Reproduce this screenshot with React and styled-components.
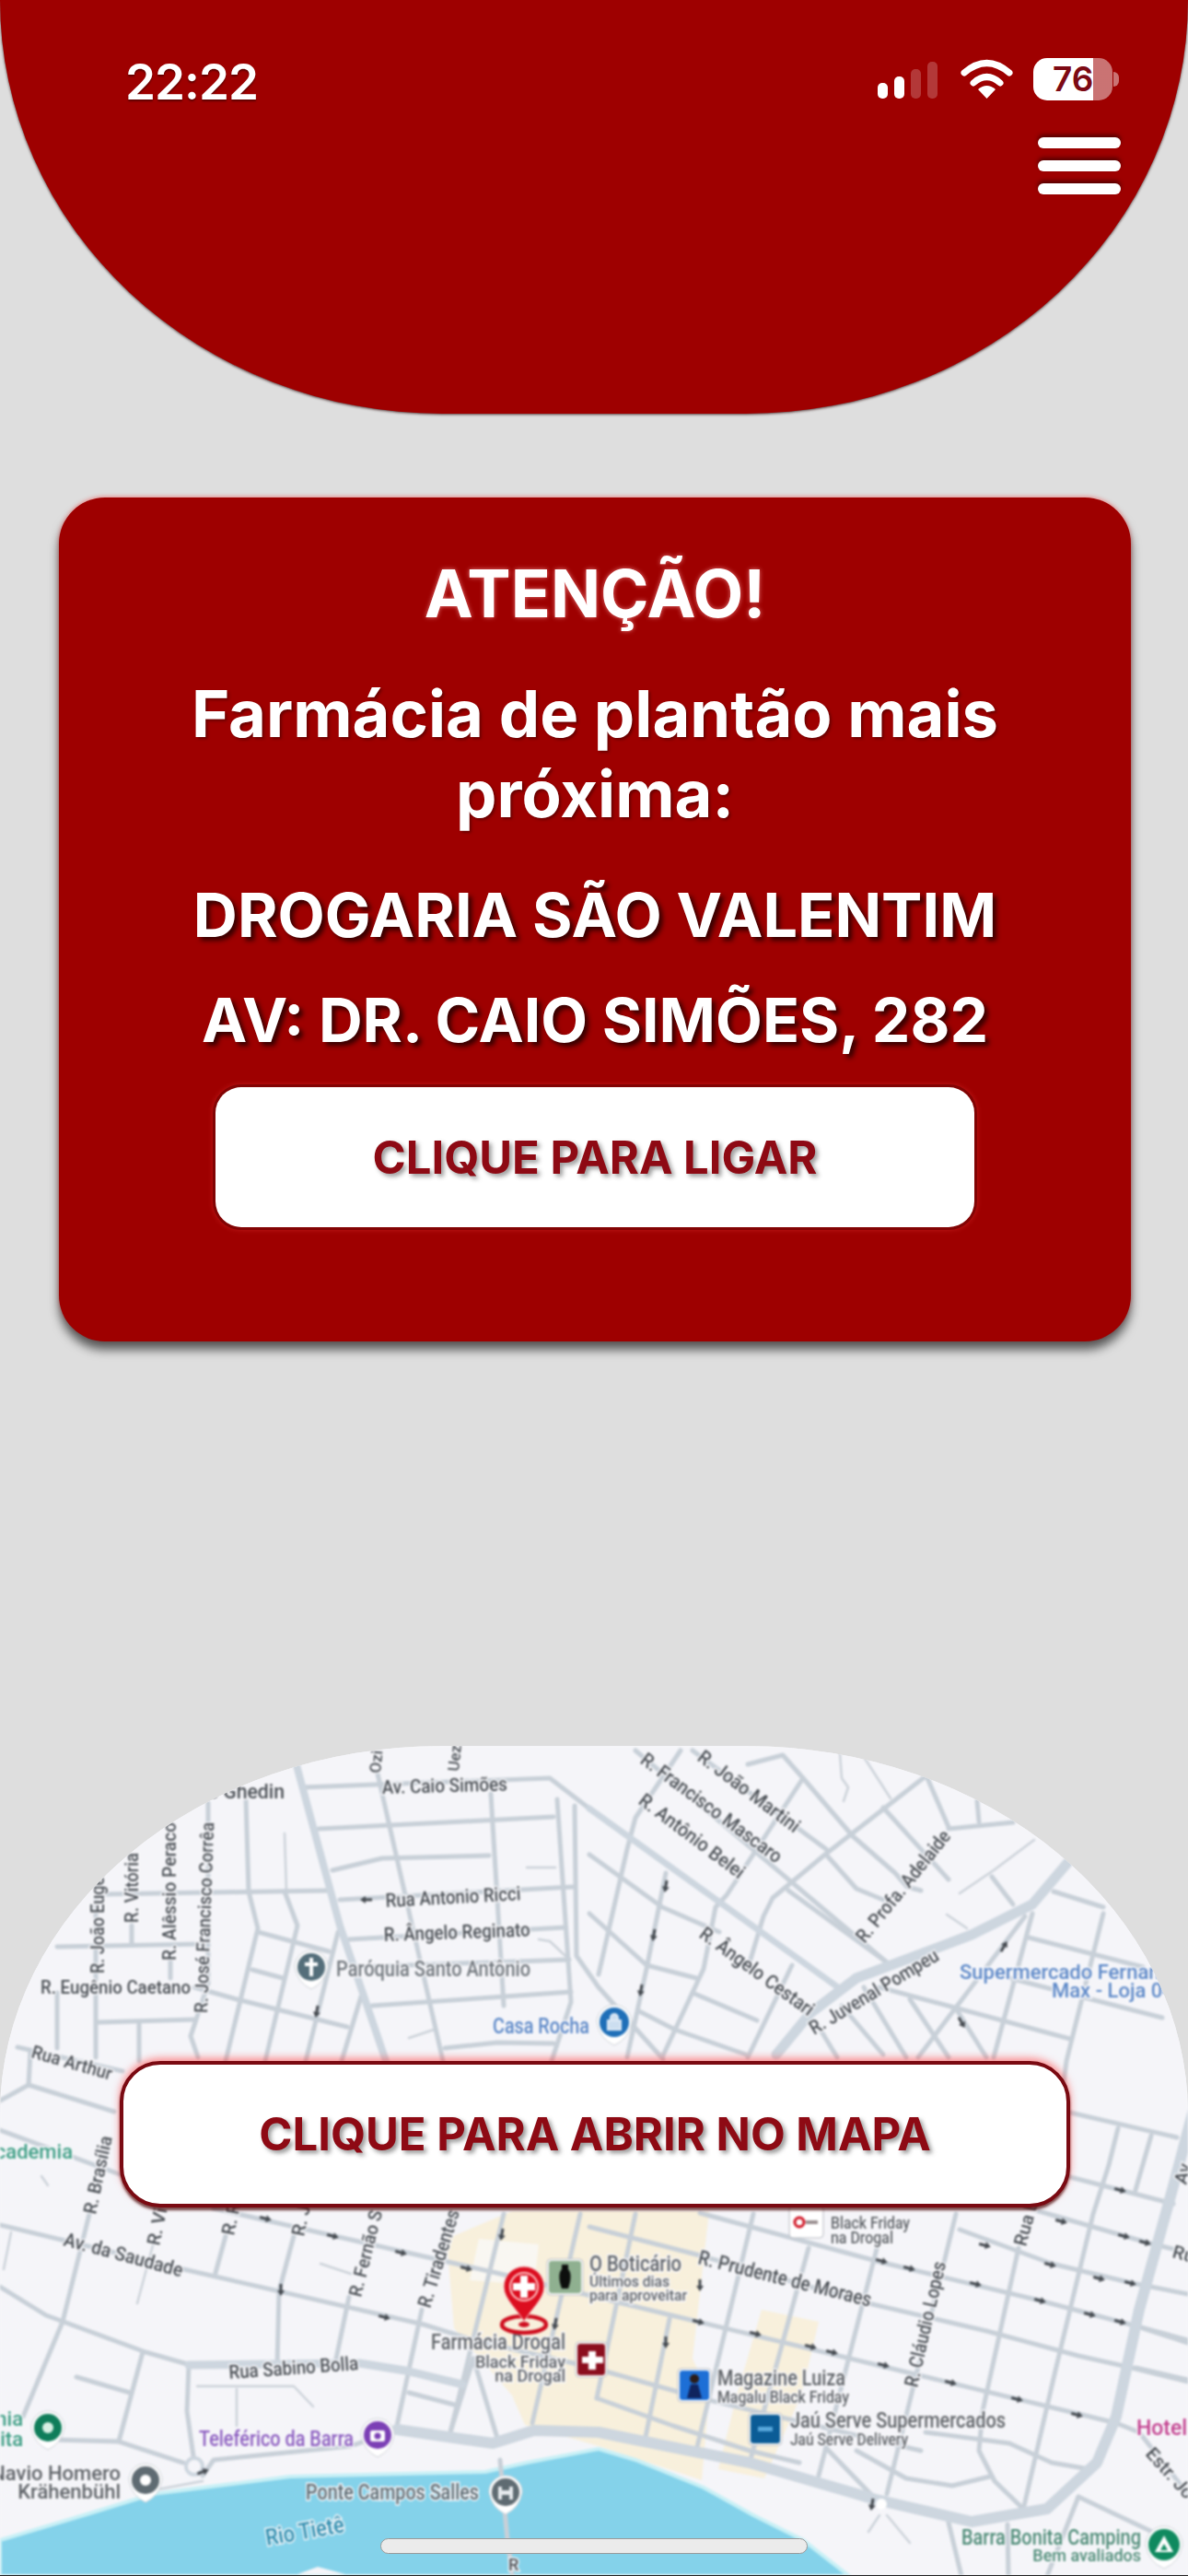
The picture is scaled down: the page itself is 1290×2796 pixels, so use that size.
import React from 'react';
import styled, { createGlobalStyle } from 'styled-components';

const GlobalStyle = createGlobalStyle`
  html, body {
    margin: 0;
    padding: 0;
    background: #dedede;
  }
`;

const FONT = `Inter, "Liberation Sans", sans-serif`;
const RED = '#9e0000';

const Page = styled.div`
  position: relative;
  width: 1290px;
  height: 2796px;
  overflow: hidden;
  display: flex;
  flex-direction: column;
  background: #dedede;
  font-family: ${FONT};
`;

const Header = styled.header`
  box-sizing: border-box;
  height: 449px;
  flex: none;
  padding: 63px 82px 0 136px;
  background: ${RED};
  border-radius: 0 0 480px 480px / 0 0 449px 449px;
  box-shadow: 0 1px 3px rgba(40, 0, 0, 0.75);
`;

const StatusBar = styled.div`
  display: flex;
  align-items: flex-start;
  justify-content: space-between;
`;

const Clock = styled.div`
  color: #fff;
  font-size: 53px;
  line-height: 54px;
  font-weight: 600;
  margin-top: -1px;
  letter-spacing: -1px;
  text-shadow: 0 2px 2px rgba(70, 0, 0, 0.7);
`;

const StatusIcons = styled.div`
  display: flex;
  align-items: flex-end;
  height: 46px;
`;

const Signal = styled.div`
  display: flex;
  align-items: flex-end;
  gap: 7px;
  margin-right: 25px;
  margin-bottom: 2px;
`;

const SignalBar = styled.span`
  width: 11px;
  height: ${(p) => p.$h}px;
  border-radius: 5px;
  background: ${(p) => (p.$on ? '#fff' : 'rgba(255,255,255,0.22)')};
`;

const Wifi = styled.svg`
  width: 57px;
  height: 43px;
  margin-right: 22px;
  margin-bottom: 2px;
`;

const Battery = styled.div`
  position: relative;
  box-sizing: border-box;
  width: 86px;
  height: 46px;
  padding-left: 21px;
  border-radius: 15px;
  color: #7d0a14;
  font-size: 37px;
  line-height: 46px;
  font-weight: 600;
  background: linear-gradient(90deg, #fff 0, #fff 76%, rgba(255, 255, 255, 0.45) 76%);

  &::after {
    content: '';
    position: absolute;
    right: -7px;
    top: 15px;
    width: 6px;
    height: 16px;
    border-radius: 0 8px 8px 0;
    background: rgba(255, 255, 255, 0.45);
  }
`;

const MenuButton = styled.div`
  display: flex;
  flex-direction: column;
  gap: 13px;
  width: 90px;
  margin: 33px -9px 0 auto;
`;

const MenuBar = styled.span`
  height: 12px;
  border-radius: 6px;
  background: #fff;
  box-shadow: 0 -3px 4px rgba(50, 0, 0, 0.65);
`;

const AlertCard = styled.section`
  box-sizing: border-box;
  flex: none;
  width: 1164px;
  height: 916px;
  margin: 91px 0 0 64px;
  padding-top: 64px;
  display: flex;
  flex-direction: column;
  align-items: center;
  border-radius: 50px;
  background: ${RED};
  color: #fff;
  text-align: center;
  box-shadow: 0 9px 11px rgba(0, 0, 0, 0.6), 0 -1px 4px rgba(255, 60, 60, 0.5);
`;

const Title = styled.h1`
  margin: 0;
  font-size: 71px;
  line-height: 80px;
  font-weight: 700;
  text-shadow: 0 0 5px rgba(255, 170, 170, 0.7);
`;

const Subtitle = styled.h2`
  width: 960px;
  margin: 47px 0 0;
  font-size: 70.5px;
  line-height: 87px;
  font-weight: 700;
  text-shadow: 2px 2px 3px rgba(60, 0, 0, 0.55);
`;

const InfoLine = styled.p`
  margin: ${(p) => p.$top}px 0 0;
  font-size: ${(p) => p.$size}px;
  line-height: 80px;
  font-weight: 700;
  white-space: nowrap;
  text-shadow: 4px 4px 5px rgba(30, 0, 0, 0.8);
`;

const CallButton = styled.button`
  width: 824px;
  height: 152px;
  margin-top: 33px;
  border: 0;
  border-radius: 28px;
  background: #fff;
  color: #8e0a14;
  font-family: ${FONT};
  font-size: 49px;
  font-weight: 700;
  text-shadow: 3px 3px 5px rgba(0, 0, 0, 0.4);
  box-shadow: 0 0 0 3px rgba(110, 0, 0, 0.7), 0 0 5px 4px rgba(255, 70, 70, 0.25);
`;

const MapPanel = styled.div`
  position: relative;
  flex: 1;
  margin-top: 439px;
  border-radius: 480px 480px 0 0 / 400px 400px 0 0;
  overflow: hidden;
  background: #f5f5f9;
  border-bottom: 1px solid #222;
`;

const MapArt = styled.svg`
  display: block;
  width: 1290px;
  height: 900px;
  font-family: Roboto, "Liberation Sans", sans-serif;
  filter: blur(0.9px);
`;

const MapButton = styled.button`
  position: absolute;
  left: 130px;
  top: 342px;
  box-sizing: border-box;
  width: 1032px;
  height: 159px;
  border: 4px solid #7a0a12;
  border-radius: 44px;
  background: #fff;
  color: #8e0a14;
  font-family: ${FONT};
  font-size: 49px;
  font-weight: 700;
  text-shadow: 3px 3px 5px rgba(0, 0, 0, 0.42);
  box-shadow: 0 -3px 9px rgba(255, 50, 50, 0.55), 0 3px 3px rgba(50, 0, 0, 0.7);
`;

const HomeIndicator = styled.div`
  position: absolute;
  left: 413px;
  bottom: 23px;
  box-sizing: border-box;
  width: 464px;
  height: 17px;
  border-radius: 9px;
  border: 1px solid #9a9a9a;
  background: #ebebeb;
`;

// road polylines, in page coordinates
const thick = [
  { w: 8, line: [[319, 1905], [369, 2090], [419, 2237]] },
  { w: 7, line: [[640, 1963], [914, 2160]] },
  { w: 11, line: [[843, 2230], [880, 2185], [930, 2147], [1055, 2100], [1121, 2067], [1165, 2015]] },
  { w: 12, line: [[431, 2637], [535, 2652], [580, 2638], [650, 2640], [814, 2673], [951, 2713], [1055, 2737], [1137, 2723], [1191, 2673], [1212, 2623], [1237, 2507], [1274, 2373], [1296, 2290]] },
  { w: 9, line: [[205, 2567], [390, 2565], [440, 2573], [502, 2588]] },
];

const medium = [
  [[328, 1940], [597, 1930], [640, 1963]],
  [[346, 1985], [601, 1972]],
  [[361, 2030], [415, 2017], [531, 2014]],
  [[112, 2056], [357, 2052]],
  [[369, 2062], [622, 2048]],
  [[62, 2113], [220, 2110]],
  [[379, 2105], [614, 2092]],
  [[386, 2135], [618, 2127]],
  [[211, 2157], [257, 2170], [377, 2200]],
  [[404, 2177], [620, 2162]],
  [[106, 2195], [211, 2192]],
  [[483, 2223], [540, 2217], [601, 2218]],
  [[19, 2222], [133, 2248]],
  [[31, 2263], [124, 2292]],
  [[31, 2263], [33, 2227]],
  [[0, 2280], [31, 2263]],
  [[226, 1957], [226, 2153], [207, 2210], [215, 2233]],
  [[267, 1953], [270, 2053], [280, 2093], [245, 2237]],
  [[309, 2053], [323, 2090], [288, 2237]],
  [[367, 2097], [332, 2237]],
  [[410, 1925], [481, 2237]],
  [[533, 1947], [547, 2177]],
  [[605, 1953], [620, 2173], [599, 2237]],
  [[624, 1960], [626, 2123], [650, 2157], [720, 2235]],
  [[185, 2123], [185, 2147]],
  [[143, 2090], [143, 2110]],
  [[104, 2060], [104, 2233]],
  [[62, 2163], [62, 2223]],
  [[151, 2197], [151, 2237]],
  [[280, 2097], [357, 2118]],
  [[274, 2138], [307, 2147]],
  [[392, 2167], [371, 2237]],
  [[690, 1900], [963, 2130]],
  [[752, 1900], [897, 2007]],
  [[812, 1915], [850, 1905], [872, 1930], [926, 1993], [972, 2033], [985, 2048], [1000, 2052]],
  [[897, 2013], [930, 2050], [959, 2062]],
  [[1005, 1928], [897, 2012], [839, 2060], [829, 2080], [814, 2130]],
  [[872, 1930], [789, 2057], [777, 2070], [764, 2137], [719, 2233]],
  [[739, 1900], [690, 1973], [681, 2007], [650, 2143]],
  [[723, 2033], [702, 2137], [681, 2233]],
  [[640, 2013], [719, 2070], [781, 2097]],
  [[640, 2077], [702, 2133], [756, 2147]],
  [[752, 2163], [822, 2193]],
  [[694, 2183], [733, 2203], [810, 2230]],
  [[860, 2133], [812, 2233]],
  [[856, 2052], [963, 2130]],
  [[959, 1962], [1030, 2040]],
  [[1007, 1930], [1030, 1983]],
  [[1030, 1985], [1100, 1978]],
  [[1061, 1955], [1063, 1977]],
  [[1077, 2037], [1100, 2067]],
  [[1121, 2077], [1079, 2233]],
  [[1113, 2080], [997, 2233]],
  [[1144, 2053], [1198, 2070]],
  [[1198, 2077], [1158, 2237], [1150, 2300]],
  [[1117, 2103], [1241, 2135]],
  [[955, 2157], [1162, 2213]],
  [[1096, 2147], [1262, 2190]],
  [[938, 2157], [984, 2233]],
  [[988, 2170], [1030, 2233]],
  [[1038, 2180], [1071, 2233]],
  [[914, 2177], [959, 2230]],
  [[889, 2200], [909, 2233]],
  [[1162, 2293], [1278, 2320]],
  [[1214, 2310], [1204, 2350], [1187, 2403], [1146, 2573], [1112, 2720]],
  [[1250, 2318], [1233, 2377]],
  [[0, 2312], [130, 2360]],
  [[0, 2415], [199, 2463], [460, 2523], [514, 2540], [640, 2569], [757, 2602], [1000, 2660]],
  [[232, 2397], [539, 2467], [758, 2520], [1171, 2620], [1212, 2630]],
  [[640, 2417], [756, 2447], [943, 2500], [1071, 2530], [1171, 2557], [1229, 2570], [1290, 2585]],
  [[760, 2402], [955, 2455], [1129, 2497], [1216, 2520], [1290, 2540]],
  [[1042, 2420], [1142, 2457], [1229, 2478], [1290, 2490]],
  [[1121, 2398], [1249, 2435], [1290, 2445]],
  [[1162, 2363], [1274, 2392]],
  [[97, 2403], [68, 2520], [25, 2623]],
  [[245, 2427], [234, 2467]],
  [[319, 2427], [303, 2487], [301, 2567]],
  [[379, 2493], [365, 2560]],
  [[458, 2507], [431, 2633]],
  [[547, 2403], [489, 2640]],
  [[630, 2403], [578, 2630]],
  [[205, 2567], [203, 2617], [211, 2673]],
  [[444, 2597], [493, 2610]],
  [[514, 2560], [489, 2640]],
  [[514, 2560], [539, 2643]],
  [[0, 2482], [50, 2513], [158, 2553], [207, 2567]],
  [[431, 2637], [381, 2655], [232, 2670], [220, 2687]],
  [[54, 2648], [129, 2650], [199, 2673]],
  [[155, 2553], [129, 2650]],
  [[83, 2580], [141, 2597]],
  [[543, 2670], [551, 2757], [556, 2793]],
  [[878, 2440], [814, 2673]],
  [[818, 2403], [756, 2660]],
  [[727, 2517], [700, 2650]],
  [[690, 2403], [648, 2603]],
  [[953, 2437], [889, 2687]],
  [[1038, 2403], [963, 2707]],
  [[1106, 2440], [1067, 2617], [1063, 2660], [1080, 2693], [1111, 2723]],
  [[648, 2603], [731, 2633], [814, 2660], [868, 2673]],
  [[1212, 2630], [1237, 2640], [1290, 2707]],
  [[1233, 2570], [1290, 2583]],
  [[1241, 2527], [1290, 2543]],
  [[1005, 2640], [1096, 2652], [1142, 2673], [1183, 2680]],
  [[930, 2660], [984, 2690], [1034, 2698], [1075, 2688]],
  [[897, 2657], [955, 2717]],
  [[1171, 2710], [1137, 2796]],
  [[1171, 2710], [1249, 2747]],
  [[1030, 2738], [1044, 2796]],
  [[1094, 2740], [1095, 2796]],
];

const thin = [
  [[309, 1990], [311, 2053]],
  [[444, 2212], [471, 2203]],
  [[585, 2105], [597, 2107], [614, 2123]],
  [[572, 2027], [603, 2027]],
  [[1123, 1997], [1079, 2030], [1042, 2055]],
  [[1028, 2078], [1050, 2093]],
  [[938, 1907], [967, 1952]],
  [[912, 1903], [914, 1930], [921, 1940], [916, 1955]],
  [[166, 2437], [149, 2500]],
  [[348, 2457], [381, 2468]],
  [[214, 2590], [319, 2590], [340, 2612]],
  [[257, 2593], [257, 2633]],
  [[166, 2703], [220, 2693]],
  [[963, 2730], [988, 2760]],
  [[955, 2730], [943, 2748]],
  [[45, 2362], [52, 2372]],
  [[12, 2423], [4, 2463]],
];

const arrows = [
  [288, 2408, 14], [361, 2427, 14], [435, 2445, 14], [506, 2462, 14], [305, 2485, 90], [417, 2515, 14],
  [545, 2425, 100], [603, 2522, 100], [220, 2683, -20], [760, 2480, 90], [758, 2520, 14], [820, 2533, 14],
  [880, 2547, 14], [903, 2553, 14], [959, 2567, 14], [1032, 2586, 14], [1104, 2604, 14], [1169, 2621, 14],
  [723, 2542, 90], [957, 2454, 14], [987, 2462, 14], [1059, 2479, 14], [1129, 2497, 14], [1183, 2512, 14],
  [1216, 2520, 14], [1069, 2437, 14], [1140, 2458, 14], [1193, 2473, 14], [1227, 2478, 14], [1152, 2411, 14],
  [1220, 2427, 14], [1243, 2434, 14], [1216, 2377, 14], [947, 2718, 100], [723, 2047, 100], [710, 2100, 100],
  [696, 2160, 100], [1090, 2113, -60], [1044, 2195, 60], [344, 2183, 100], [398, 2062, 180],
];

const GREY = '#5f6368';
const DARK = '#4a4f55';
const BLUE = '#5b87c7';

// t text, x/y baseline start, s size, r rotation, l length on the picture
const labels = [
  { t: 's Ghedin', x: 226, y: 1952, s: 22, l: 83, c: DARK },
  { t: 'Av. Caio Simões', x: 415, y: 1947, s: 21, r: -1.5, l: 136, c: DARK },
  { t: 'R. Ângelo Reginato', x: 417, y: 2107, s: 21, r: -2, l: 159, c: DARK },
  { t: 'Rua Antonio Ricci', x: 419, y: 2070, s: 21, r: -3, l: 147, c: DARK },
  { t: 'Paróquia Santo Antônio', x: 365, y: 2145, s: 23, l: 211, c: '#70767c' },
  { t: 'R. Eugênio Caetano', x: 44, y: 2164, s: 21, l: 163, c: DARK },
  { t: 'R. João Eugênio', x: 113, y: 2142, s: 20, r: -90, l: 130, c: DARK },
  { t: 'R. Vitória', x: 150, y: 2087, s: 20, r: -90, l: 76, c: DARK },
  { t: 'R. Alêssio Peraco', x: 191, y: 2128, s: 20, r: -90, l: 150, c: DARK },
  { t: 'R. José Francisco Corrêa', x: 225, y: 2185, s: 20, r: -88, l: 207, c: DARK },
  { t: 'Rua Arthur', x: 33, y: 2233, s: 20, r: 16, l: 90, c: DARK },
  { t: 'Academia', x: 79, y: 2343, s: 22, a: 'end', c: '#3c9d84' },
  { t: 'R. Brasília', x: 104, y: 2404, s: 20, r: -78, l: 86, c: DARK },
  { t: 'Ozi', x: 413, y: 1925, s: 17, r: -84, c: DARK },
  { t: 'Uez', x: 498, y: 1923, s: 17, r: -84, c: DARK },
  { t: 'R. Francisco Mascaro', x: 694, y: 1913, s: 21, r: 36.5, l: 185, c: DARK },
  { t: 'R. João Martini', x: 756, y: 1910, s: 21, r: 37, l: 133, c: DARK },
  { t: 'R. Antônio Belei', x: 692, y: 1957, s: 21, r: 37, l: 138, c: DARK },
  { t: 'R. Profa. Adelaide', x: 939, y: 2110, s: 21, r: -51, l: 150, c: DARK },
  { t: 'R. Ângelo Cestari', x: 758, y: 2102, s: 21, r: 36, l: 148, c: DARK },
  { t: 'R. Juvenal Pompeu', x: 884, y: 2209, s: 21, r: -31, l: 160, c: DARK },
  { t: 'Supermercado Fernanda', x: 1042, y: 2148, s: 22, c: BLUE },
  { t: 'Max - Loja 04', x: 1142, y: 2168, s: 22, c: BLUE },
  { t: 'Casa Rocha', x: 535, y: 2207, s: 23, l: 105, c: BLUE },
  { t: 'Av. da Saudade', x: 68, y: 2437, s: 21, r: 15, l: 133, c: DARK },
  { t: 'R. Vi', x: 173, y: 2438, s: 20, r: -78, c: DARK },
  { t: 'R. R', x: 254, y: 2427, s: 20, r: -78, c: DARK },
  { t: 'R. J', x: 330, y: 2428, s: 20, r: -78, c: DARK },
  { t: 'R. Fernão S', x: 392, y: 2494, s: 20, r: -76, l: 96, c: DARK },
  { t: 'R. Tiradentes', x: 467, y: 2506, s: 21, r: -73, l: 110, c: DARK },
  { t: 'Rua Sabino Bolla', x: 249, y: 2582, s: 21, r: -4, l: 141, c: DARK },
  { t: 'Farmácia Drogal', x: 468, y: 2550, s: 24, l: 146, c: GREY },
  { t: 'Black Friday', x: 614, y: 2570, s: 18, a: 'end', c: GREY },
  { t: 'na Drogal', x: 614, y: 2585, s: 18, a: 'end', c: GREY },
  { t: 'O Boticário', x: 640, y: 2465, s: 24, l: 100, c: GREY },
  { t: 'Últimos dias', x: 640, y: 2482, s: 17, l: 87, c: GREY },
  { t: 'para aproveitar', x: 640, y: 2497, s: 17, l: 106, c: GREY },
  { t: 'Magazine Luiza', x: 779, y: 2589, s: 24, l: 139, c: GREY },
  { t: 'Magalu Black Friday', x: 779, y: 2608, s: 18, l: 143, c: GREY },
  { t: 'Jaú Serve Supermercados', x: 858, y: 2635, s: 24, l: 234, c: GREY },
  { t: 'Jaú Serve Delivery', x: 858, y: 2654, s: 18, l: 128, c: GREY },
  { t: 'Black Friday', x: 902, y: 2419, s: 18, l: 86, c: GREY },
  { t: 'na Drogal', x: 902, y: 2435, s: 18, l: 68, c: GREY },
  { t: 'R. Prudente de Moraes', x: 757, y: 2457, s: 22, r: 14, l: 193, c: DARK },
  { t: 'R. Cláudio Lopes', x: 996, y: 2592, s: 21, r: -77, l: 139, c: DARK },
  { t: 'Rua L', x: 1114, y: 2439, s: 20, r: -75, c: DARK },
  { t: 'Av.', x: 1288, y: 2372, s: 20, r: -75, c: DARK },
  { t: 'Ru', x: 1272, y: 2450, s: 20, r: 15, c: DARK },
  { t: 'Hotel T', x: 1234, y: 2643, s: 23, c: '#c2408f' },
  { t: 'Estr. Jo', x: 1243, y: 2664, s: 20, r: 48, c: DARK },
  { t: 'Barra Bonita Camping', x: 1044, y: 2762, s: 24, l: 195, c: '#4c8a76' },
  { t: 'Bem avaliados', x: 1239, y: 2780, s: 18, a: 'end', c: '#4c8a76' },
  { t: 'Teleférico da Barra', x: 216, y: 2655, s: 24, l: 168, c: '#8a5bbf' },
  { t: 'Navio Homero', x: 131, y: 2692, s: 22, a: 'end', c: GREY },
  { t: 'Krähenbühl', x: 131, y: 2712, s: 22, a: 'end', c: GREY },
  { t: 'nia', x: 25, y: 2633, s: 22, a: 'end', c: '#3c9d84' },
  { t: 'ita', x: 25, y: 2655, s: 22, a: 'end', c: '#3c9d84' },
  { t: 'Ponte Campos Salles', x: 332, y: 2713, s: 23, l: 188, c: '#5c6b73' },
  { t: 'Rio Tietê', x: 290, y: 2763, s: 25, r: -10, l: 86, c: '#2b8cae' },
  { t: 'R', x: 552, y: 2790, s: 18, c: DARK },
];

const toPoints = (line) => line.map((p) => p.join(',')).join(' ');

function Road({ line, width, color }) {
  return (
    <polyline
      points={toPoints(line)}
      fill="none"
      stroke={color}
      strokeWidth={width}
      strokeLinecap="round"
      strokeLinejoin="round"
    />
  );
}

// round map marker with a small tail and a white halo
function Pin({ x, y, r = 15, color, children }) {
  return (
    <g transform={`translate(${x} ${y})`}>
      <path
        d={`M${-r - 3} 0 A${r + 3} ${r + 3} 0 1 1 ${r + 3} 0 Q${r} ${r + 2} 0 ${r + 9} Q${-r} ${r + 2} ${-r - 3} 0Z`}
        fill="#fff"
        stroke="#cfd3d8"
        strokeWidth="1"
      />
      <circle r={r} fill={color} />
      {children}
    </g>
  );
}

function StoreIcon({ x, y, w, h, color, children }) {
  return (
    <g transform={`translate(${x} ${y})`}>
      <rect x="-2" y="-2" width={w + 4} height={h + 4} rx="4" fill="#fff" stroke="#b9bcc2" strokeWidth="1" />
      <rect width={w} height={h} rx="3" fill={color} />
      {children}
    </g>
  );
}

function MapDrawing() {
  return (
    <MapArt viewBox="0 1895 1290 900">
      <rect x="0" y="1895" width="1290" height="900" fill="#f5f5f9" />
      <polygon
        points="556,2400 770,2400 752,2560 770,2600 762,2692 650,2655 570,2632 556,2600 493,2527 485,2430"
        fill="#f8f0dc"
      />
      <polygon points="827,2507 889,2520 870,2600 830,2690 780,2680 800,2600" fill="#f8f0dc" />
      <polygon points="520,2430 585,2436 580,2480 510,2475" fill="#f9f7f2" />

      <polygon
        points="0,2757 91,2730 166,2707 315,2688 527,2683 572,2673 650,2658 690,2670 764,2700 818,2730 872,2757 922,2796 0,2796"
        fill="#84d2ea"
        stroke="#c8f0f6"
        strokeWidth="4"
      />
      <polygon points="323,2794 345,2786 375,2794" fill="#f5f5f9" />

      {thin.map((line, i) => (
        <Road key={i} line={line} width={2.5} color="#cdd3da" />
      ))}
      {medium.map((line, i) => (
        <Road key={i} line={line} width={5} color="#c8d0d8" />
      ))}
      {thick.map((road, i) => (
        <Road key={i} line={road.line} width={road.w} color="#cdd6df" />
      ))}
      <circle cx="211" cy="2677" r="9" fill="#f5f5f9" stroke="#cdd6df" strokeWidth="4" />
      <circle cx="957" cy="2718" r="6" fill="#fff" />

      {arrows.map(([x, y, r], i) => (
        <path key={i} d="M-6 -1.5H1V-4L7 0L1 4V1.5H-6Z" fill="#454a50" transform={`translate(${x} ${y}) rotate(${r})`} />
      ))}

      {labels.map((l, i) => (
        <text
          key={i}
          x={l.x}
          y={l.y}
          fontSize={l.s}
          fontWeight="500"
          fill={l.c}
          stroke="#f8f8fb"
          strokeWidth="3"
          paintOrder="stroke"
          textAnchor={l.a || 'start'}
          textLength={l.l}
          lengthAdjust="spacingAndGlyphs"
          transform={l.r ? `rotate(${l.r} ${l.x} ${l.y})` : undefined}
        >
          {l.t}
        </text>
      ))}

      <Pin x={338} y={2135} color="#546e7a">
        <path d="M-2 -10H2V-5H7V-1H2V10H-2V-1H-7V-5H-2Z" fill="#fff" />
      </Pin>
      <Pin x={667} y={2195} r={16} color="#1f6fb8">
        <path d="M-7 -2H7V8H-7Z M-4 -2V-5A4 4 0 0 1 4 -5V-2" fill="#dfeaf6" stroke="#dfeaf6" strokeWidth="2" fillOpacity="0.9" />
      </Pin>
      <Pin x={410} y={2643} color="#7b3fb5">
        <rect x="-8" y="-5" width="16" height="12" rx="2" fill="#fff" />
        <circle cy="1" r="3.5" fill="#7b3fb5" />
      </Pin>
      <Pin x={158} y={2692} color="#5f6b72">
        <circle r="6" fill="#fff" />
      </Pin>
      <Pin x={52} y={2635} color="#0f7d5a">
        <circle r="6" fill="#d8f0e4" />
      </Pin>
      <Pin x={549} y={2705} color="#5f6b72">
        <path d="M-8 -6H-4V-2H4V-6H8V8H4V3H-4V8H-8Z" fill="#e6eaed" />
      </Pin>
      <Pin x={1264} y={2762} r={17} color="#0f8a5f">
        <path d="M0 -10L10 8H-10Z" fill="#fff" />
        <path d="M0 -1L4 6H-4Z" fill="#0f8a5f" />
      </Pin>

      <StoreIcon x={596} y={2454} w={35} h={35} color="#8fb090">
        <path d="M14 4H21V9C25 13 24 22 21 30H14C11 22 10 13 14 9Z" fill="#0d0f0d" />
      </StoreIcon>
      <StoreIcon x={627} y={2544} w={30} h={34} color="#8b0e1e">
        <path d="M12 8H20V14H28V21H20V28H12V21H5V14H12Z" fill="#fff" />
      </StoreIcon>
      <StoreIcon x={859} y={2396} w={33} h={31} color="#ffffff">
        <circle cx="9" cy="16" r="5" fill="none" stroke="#d01020" strokeWidth="3" />
        <rect x="16" y="14" width="13" height="4" fill="#9a8f90" />
      </StoreIcon>
      <StoreIcon x={738} y={2573} w={32} h={32} color="#1d6fd6">
        <circle cx="16" cy="9" r="5" fill="#2b1c18" />
        <path d="M8 30L12 15H20L24 30Z" fill="#10245e" />
      </StoreIcon>
      <StoreIcon x={815} y={2621} w={32} h={31} color="#0b5c96">
        <rect x="8" y="13" width="16" height="5" fill="#59a8dc" />
      </StoreIcon>

      <g transform="translate(569 2482)">
        <ellipse cx="0" cy="41" rx="24" ry="9" fill="none" stroke="#cf0d1e" strokeWidth="4.5" />
        <ellipse cx="0" cy="41" rx="6" ry="3" fill="#cf0d1e" />
        <path d="M-22 0A22 22 0 1 1 22 0C22 14 6 26 0 38C-6 26 -22 14 -22 0Z" fill="#dc0d1f" stroke="#f7d8d8" strokeWidth="1" />
        <circle r="15" fill="none" stroke="#ffc9c9" strokeWidth="2" />
        <path d="M-4 -12H4V-4H12V4H4V12H-4V4H-12V-4H-4Z" fill="#fff" />
      </g>
    </MapArt>
  );
}

export default function App() {
  return (
    <Page>
      <GlobalStyle />
      <Header>
        <StatusBar>
          <Clock>22:22</Clock>
          <StatusIcons>
            <Signal>
              <SignalBar $h={17} $on />
              <SignalBar $h={24} $on />
              <SignalBar $h={32} />
              <SignalBar $h={40} />
            </Signal>
            <Wifi viewBox="0 0 57 43">
              <path d="M4 15Q28.5 -6 53 15" fill="none" stroke="#fff" strokeWidth="7" strokeLinecap="round" />
              <path d="M14 26Q28.5 13 43 26" fill="none" stroke="#fff" strokeWidth="7" strokeLinecap="round" />
              <path d="M28.5 43L19 33Q28.5 25 38 33Z" fill="#fff" />
            </Wifi>
            <Battery>76</Battery>
          </StatusIcons>
        </StatusBar>
        <MenuButton>
          <MenuBar />
          <MenuBar />
          <MenuBar />
        </MenuButton>
      </Header>

      <AlertCard>
        <Title>ATENÇÃO!</Title>
        <Subtitle>Farmácia de plantão mais próxima:</Subtitle>
        <InfoLine $top={48} $size={66.5}>DROGARIA SÃO VALENTIM</InfoLine>
        <InfoLine $top={34} $size={66}>AV: DR. CAIO SIMÕES, 282</InfoLine>
        <CallButton>CLIQUE PARA LIGAR</CallButton>
      </AlertCard>

      <MapPanel>
        <MapDrawing />
        <MapButton>CLIQUE PARA ABRIR NO MAPA</MapButton>
        <HomeIndicator />
      </MapPanel>
    </Page>
  );
}
